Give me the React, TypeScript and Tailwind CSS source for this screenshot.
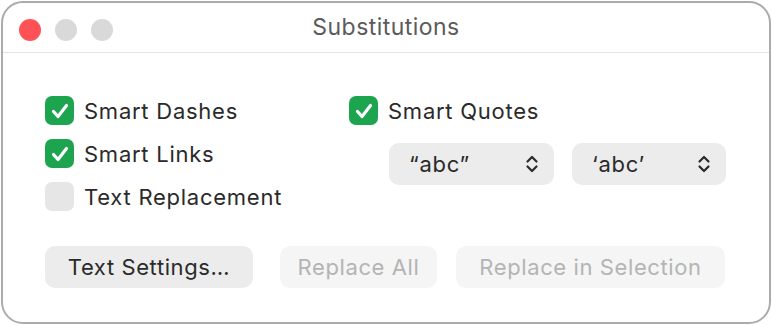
import React from 'react';

const font = { fontFamily: 'Inter, "Noto Sans", sans-serif' };

const Check = ({ checked }: { checked: boolean }) =>
  checked ? (
    <span className="flex h-[29px] w-[29px] items-center justify-center rounded-[7px] bg-[#1ca54e]">
      <svg width="22" height="22" viewBox="0 0 22 22" fill="none">
        <path d="M4.5 11.5l4.5 5 8.5-11" stroke="white" strokeWidth="3.2" strokeLinecap="round" strokeLinejoin="round" />
      </svg>
    </span>
  ) : (
    <span className="block h-[29px] w-[29px] rounded-[7px] bg-[#e6e6e6]" />
  );

const Option = ({ label, checked }: { label: string; checked: boolean }) => (
  <div className="flex h-[29px] items-center gap-[10px]">
    <Check checked={checked} />
    <span className="pt-[1px] text-[22px] tracking-[0.75px] text-[#2a2a2a]">{label}</span>
  </div>
);

const Chevrons = () => (
  <svg width="14" height="20" viewBox="0 0 14 20" fill="none">
    <path d="M2.5 7.5L7 3 11.5 7.5M2.5 12.5L7 17 11.5 12.5" stroke="#2a2a2a" strokeWidth="2.2" strokeLinecap="round" strokeLinejoin="round" />
  </svg>
);

const Popup = ({ label, width }: { label: string; width: string }) => (
  <div className={`flex h-[42px] items-center justify-between rounded-[10px] bg-[#ececec] pl-[20px] pr-[15px] ${width}`}>
    <span className="text-[22px] tracking-[0.75px] text-[#2a2a2a]">{label}</span>
    <Chevrons />
  </div>
);

export default function App() {
  return (
    <div className="h-[326px] w-[772px] bg-white p-[1px]" style={font}>
      <div className="flex h-[323px] w-[770px] flex-col rounded-[22px] border-2 border-[#ababab] bg-white">
        <div className="relative flex h-[50px] items-center justify-center border-b border-[#e3e3e3]">
          <div className="absolute left-[16px] top-[16px] flex gap-[14px]">
            <span className="h-[22px] w-[22px] rounded-full bg-[#fe5257]" />
            <span className="h-[22px] w-[22px] rounded-full bg-[#d9d9d9]" />
            <span className="h-[22px] w-[22px] rounded-full bg-[#d9d9d9]" />
          </div>
          <span className="text-[23px] tracking-[0.45px] text-[#5b5b5b]">Substitutions</span>
        </div>
        <div className="flex flex-col pl-[42px] pt-[43px]">
          <div className="flex">
            <div className="flex w-[304px] flex-col gap-[14px]">
              <Option label="Smart Dashes" checked />
              <Option label="Smart Links" checked />
              <Option label="Text Replacement" checked={false} />
            </div>
            <div className="flex flex-col">
              <Option label="Smart Quotes" checked />
              <div className="ml-[40px] mt-[18px] flex gap-[18px]">
                <Popup label="“abc”" width="w-[165px]" />
                <Popup label="‘abc’" width="w-[154px]" />
              </div>
            </div>
          </div>
          <div className="mt-[35px] flex text-[22px] tracking-[0.6px]">
            <button className="h-[42px] w-[208px] rounded-[10px] bg-[#ececec] text-[#2a2a2a]">Text Settings…</button>
            <button className="ml-[27px] h-[42px] w-[157px] rounded-[10px] bg-[#f5f5f5] text-[#b4b4b4]">Replace All</button>
            <button className="ml-[19px] h-[42px] w-[269px] rounded-[10px] bg-[#f5f5f5] text-[#b4b4b4]">Replace in Selection</button>
          </div>
        </div>
      </div>
    </div>
  );
}
